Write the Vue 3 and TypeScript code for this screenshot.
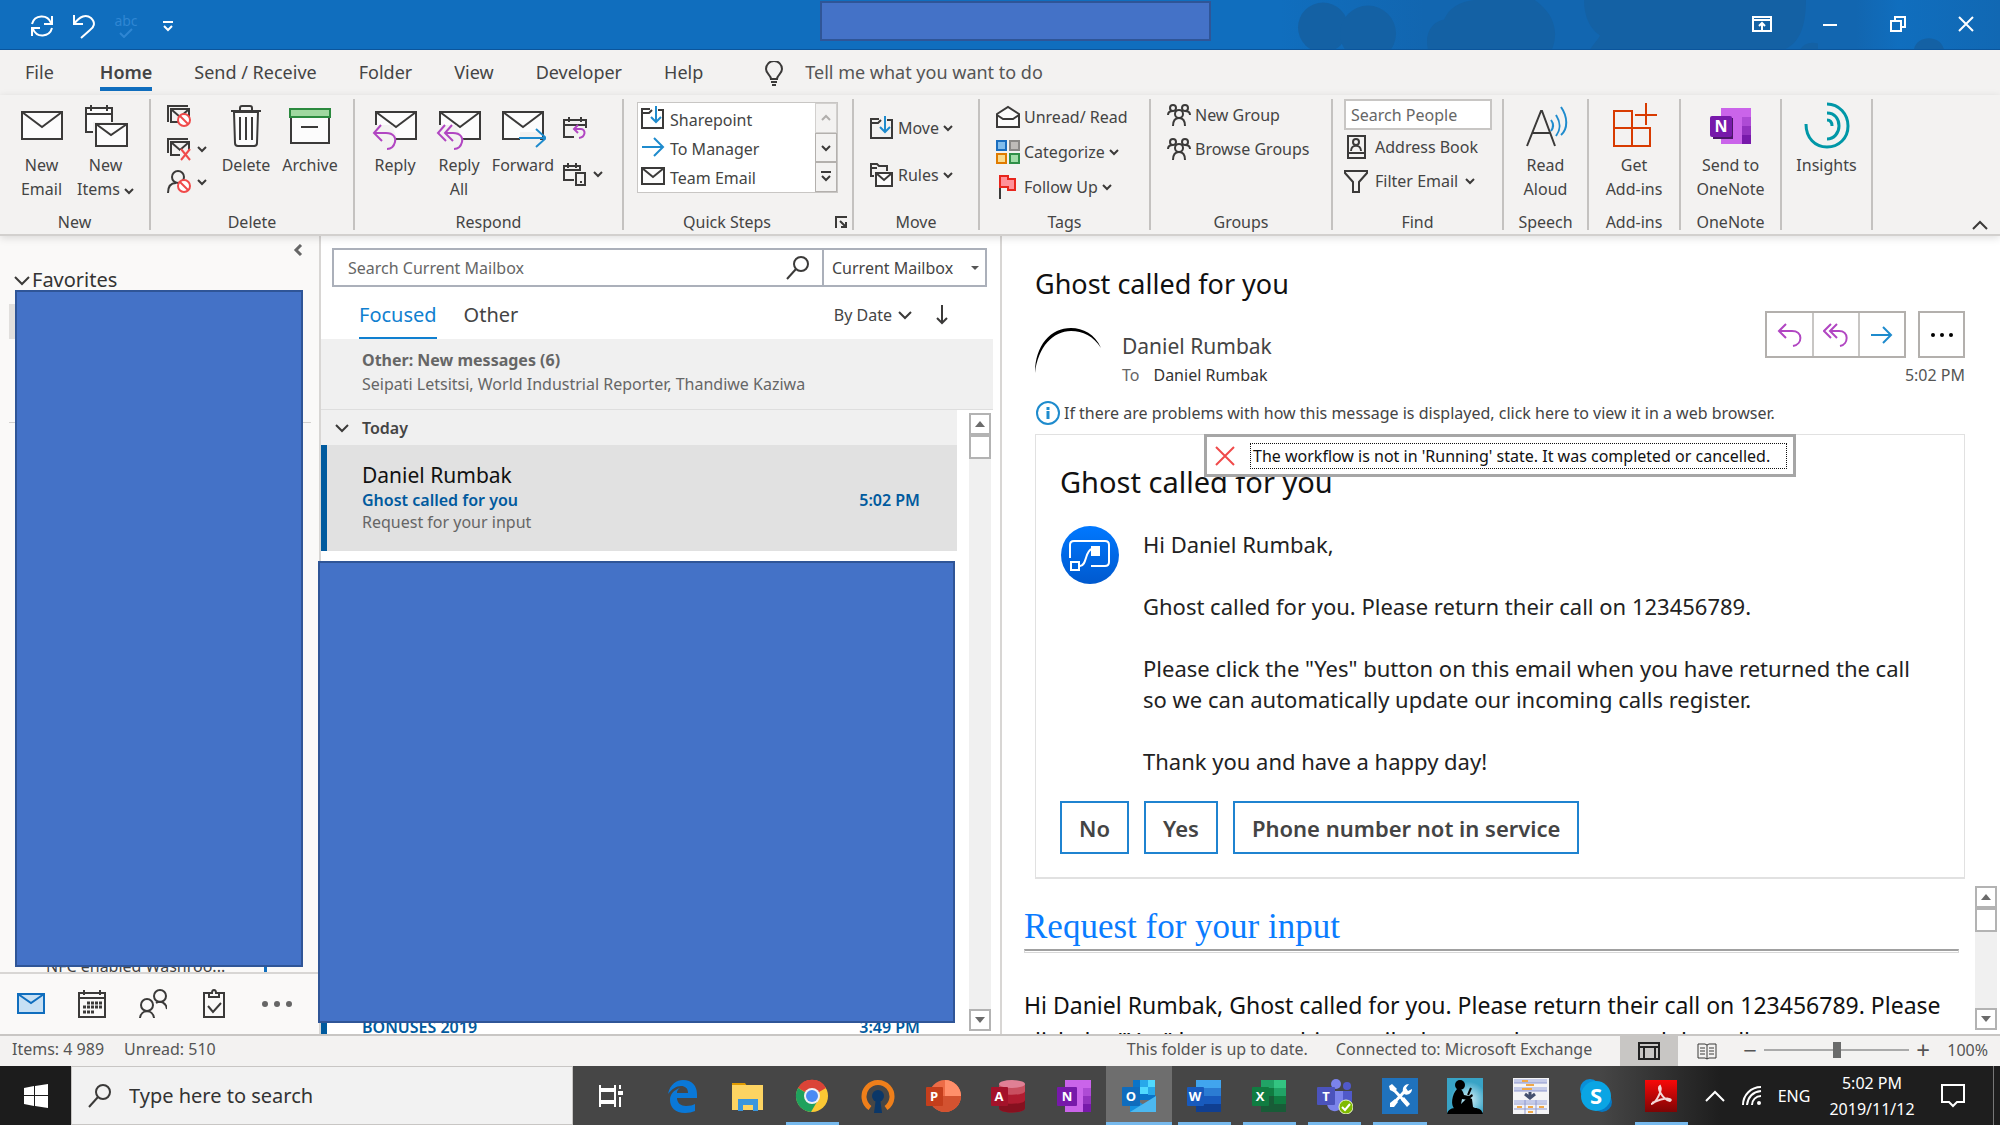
<script setup lang="ts">
import { h, ref } from 'vue'

interface IconShape { w: number; h: number; body: string }

const ink = 'fill="none" stroke="#3b3a39" stroke-width="2"'
const paper = 'fill="#fcfcfc" stroke="#3b3a39" stroke-width="2"'
const purple = 'fill="none" stroke="#b146c2" stroke-width="2"'
const blue = 'fill="none" stroke="#1e8bcd" stroke-width="2"'
const white = 'fill="none" stroke="#fff" stroke-width="2"'
const banned = (x: number, y: number) =>
  `<circle cx="${x}" cy="${y}" r="6" fill="#fff" stroke="#f04a4a" stroke-width="2"/><path d="M${x - 4} ${y - 4}l8 8" stroke="#f04a4a" stroke-width="2"/>`
const letter = (x: number, y: number, size: number, text: string) =>
  `<text x="${x}" y="${y}" font-family="Open Sans, sans-serif" font-weight="700" font-size="${size}" fill="#fff" text-anchor="middle">${text}</text>`
const people = '<circle cx="6" cy="5" r="3"/><circle cx="18" cy="5" r="3"/><circle cx="12" cy="11" r="4"/><path d="M1 12c0-3 2-4 5-4M23 12c0-3-2-4-5-4M6 23c0-5 2-8 6-8s6 3 6 8"/>'

const shapes: Record<string, IconShape> = {
  sync: { w: 26, h: 26, body: `<g ${white}><path d="M3 11a10 10 0 0 1 19-1M23 15a10 10 0 0 1-19 1"/><path d="M23 3v8h-8M3 23v-8h8"/></g>` },
  undo: { w: 24, h: 26, body: `<g ${white}><path d="M2 2v9h9"/><path d="M2 11C8 3 14 1 19 5c5 5 3 9-1 12l-9 8"/></g>` },
  tickDim: { w: 16, h: 10, body: '<path d="M2 5l4 4 8-8" fill="none" stroke="#2f86d3" stroke-width="2"/>' },
  qatMore: { w: 12, h: 12, body: `<path d="M1 2h10M2 6l4 4 4-4" ${white}/>` },
  ribbonDisplay: { w: 20, h: 16, body: '<path d="M1 1h18v14H1zM1 4h18M10 14V7M7 10l3-3 3 3" fill="none" stroke="#fff" stroke-width="2"/>' },
  minimize: { w: 16, h: 16, body: `<path d="M1 9h14" ${white}/>` },
  restore: { w: 16, h: 16, body: `<path d="M1 5h10v10H1zM5 5V1h10v10h-4" ${white}/>` },
  close: { w: 16, h: 16, body: `<path d="M1 1l14 14M15 1L1 15" ${white}/>` },
  bulb: { w: 18, h: 26, body: `<g ${ink}><path d="M6 18c0-4-5-5-5-10a8 8 0 0 1 16 0c0 5-5 6-5 10z"/><path d="M6 21h6M7 24h4"/></g>` },
  chevron: { w: 10, h: 8, body: `<path d="M1 2l4 4 4-4" ${ink}/>` },
  chevronBig: { w: 16, h: 12, body: `<path d="M1 3l7 7 7-7" ${ink}/>` },
  chevronMid: { w: 14, h: 12, body: `<path d="M1 3l6 6 6-6" ${ink}/>` },
  chevronUp: { w: 16, h: 12, body: `<path d="M1 10l7-7 7 7" ${ink}/>` },
  chevronDim: { w: 10, h: 8, body: '<path d="M1 6l4-4 4 4" fill="none" stroke="#b0aeac" stroke-width="2"/>' },
  moreSteps: { w: 10, h: 12, body: `<path d="M0 1h10M1 5l4 4 4-4" ${ink}/>` },
  fold: { w: 10, h: 12, body: '<path d="M8 1L3 6l5 5" fill="none" stroke="#666" stroke-width="3"/>' },
  mail: { w: 46, h: 48, body: `<path d="M3 10h40v27H3z" ${paper}/><path d="M3 10l20 15 20-15" ${ink}/>` },
  newItems: { w: 46, h: 48, body: `<path d="M3 6h26v24H3z" ${paper}/><path d="M3 12h26M8 3v6M24 3v6" ${ink}/><path d="M10 20h36v28H10z" fill="#f3f2f1"/><path d="M13 22h31v22H13z" ${paper}/><path d="M13 22l15 11 16-11" ${ink}/>` },
  trash: { w: 46, h: 48, body: `<path d="M11 10h24l-1 31q0 3-3 3H15q-3 0-3-3z" ${paper}/><path d="M8 9h30M17 9V6q0-2 2-2h8q2 0 2 2v3M17 15v23M23 15v23M29 15v23" ${ink}/>` },
  archive: { w: 46, h: 48, body: `<path d="M4 14h38v27H4z" ${paper}/><path d="M3 7h40v8H3z" fill="#9fd89f" stroke="#2b8a3e" stroke-width="2"/><path d="M14 25h17" ${ink}/>` },
  reply: { w: 46, h: 48, body: `<path d="M4 10h40v27H4z" ${paper}/><path d="M4 10l20 15 20-15" ${ink}/><path d="M0 23h20l6 16H0z" fill="#f3f2f1"/><path d="M4 10v12M44 37H24" ${ink}/><path d="M9 23L2 31l8 8M2 31h12c8 0 10 5 9 9s-4 7-8 7" ${purple}/>` },
  replyAll: { w: 46, h: 48, body: `<path d="M4 10h40v27H4z" ${paper}/><path d="M4 10l20 15 20-15" ${ink}/><path d="M0 23h20l8 16H0z" fill="#f3f2f1"/><path d="M4 10v12M44 37H28" ${ink}/><path d="M9 23L2 31l8 8M16 23l-7 8 8 8M9 31h8c8 0 10 5 9 9s-4 7-8 7" ${purple}/>` },
  forward: { w: 46, h: 48, body: `<path d="M3 10h40v27H3z" ${paper}/><path d="M3 10l20 15 20-15" ${ink}/><path d="M20 30h20v10H20z" fill="#f3f2f1"/><path d="M43 10v14" ${ink}/><path d="M19 36h26M36 27l10 9-10 9" ${blue}/>` },
  ignore: { w: 24, h: 24, body: `<path d="M1 18V2h20M4 18V5h18v13z" ${ink}/><path d="M5 6l8 7 8-7" ${ink}/>${banned(17, 16)}` },
  junk: { w: 24, h: 24, body: `<path d="M1 16V2h20M4 18V5h18v13z" ${ink}/><path d="M5 6l8 7 8-7" ${ink}/><path d="M13 13h11v11H13z" fill="#f3f2f1"/><path d="M14 12l9 11M23 12l-9 11" stroke="#f04a4a" stroke-width="2"/>` },
  blockUser: { w: 24, h: 24, body: `<circle cx="11" cy="7" r="6" ${ink}/><path d="M1 23c0-7 3-10 8-10" ${ink}/>${banned(17, 16)}` },
  meeting: { w: 24, h: 24, body: `<path d="M11 21H1V4h22v8M1 9h22M6 1v5M18 1v5" ${ink}/><path d="M15 9l-4 4 4 4M11 13h7c5 0 5 8-2 9" ${purple}/>` },
  device: { w: 24, h: 24, body: `<path d="M11 18H1V4h16v5M1 8h16M5 1v5M13 1v5M13 11h9v12h-9zM17 20h2" ${ink}/>` },
  folderMove: { w: 24, h: 24, body: `<path d="M9 3H1v19h21V4h-5M1 7h7l3-3" ${ink}/><path d="M15 0v16M10 11l5 5 5-5" ${blue}/>` },
  arrowRight: { w: 24, h: 24, body: `<path d="M1 12h20M13 3l9 9-9 9" ${blue}/>` },
  mailSmall: { w: 24, h: 24, body: `<path d="M1 4h22v16H1z" ${paper}/><path d="M1 4l11 9 11-9" ${ink}/>` },
  rules: { w: 24, h: 24, body: `<path d="M4 13H1V1h6l2 2h8v5M1 5h6" ${ink}/><path d="M6 10h16v13H6z" ${paper}/><path d="M6 10l8 7 8-7" ${ink}/>` },
  unread: { w: 24, h: 24, body: `<path d="M1 9L12 2l11 7v13H1z" ${paper}/><path d="M1 10l6 4h10l6-4" ${ink}/>` },
  categories: { w: 24, h: 24, body: '<g stroke-width="2"><path d="M1 1h9v9H1z" fill="#83beec" stroke="#1b6ebf"/><path d="M14 1h9v9h-9z" fill="#bebbb8" stroke="#8a8886"/><path d="M1 14h9v9H1z" fill="#f8db8f" stroke="#e07b00"/><path d="M14 14h9v9h-9z" fill="#a1dda8" stroke="#309048"/></g>' },
  flag: { w: 24, h: 24, body: '<path d="M4 2v22" stroke="#3b3a39" stroke-width="2"/><path d="M4 1h8v3h7v11h-7v-3H4z" fill="#ff9199" stroke="#e8261d" stroke-width="2"/>' },
  group: { w: 24, h: 24, body: `<g ${ink}>${people}</g>` },
  book: { w: 24, h: 24, body: `<path d="M4 1h17v22H4zM4 18h17" ${ink}/><circle cx="12" cy="7" r="3" ${ink}/><path d="M7 16c0-7 10-7 10 0" ${ink}/>` },
  filter: { w: 24, h: 24, body: `<path d="M1 2h22v2l-8 9v10H9V13L1 4z" ${ink}/>` },
  readAloud: { w: 46, h: 48, body: `<path d="M4 44L18 9h1l13 35M9 31h18" ${ink}/><path d="M28 18c3 4 3 7 0 11M33 13c5 8 5 14 0 21M38 5c7 10 7 22 0 28" ${blue}/>` },
  addins: { w: 46, h: 48, body: '<path d="M3 44V9h18v35zM3 26h36v18H3M35 1v22M24 13h22" fill="none" stroke="#d83b01" stroke-width="2"/>' },
  onenoteBig: { w: 46, h: 48, body: `<path d="M13 6h24v36H13z" fill="#ca64ea"/><path d="M34 6h9v9h-9z" fill="#ca64ea"/><path d="M34 15h9v9h-9z" fill="#ae4bd5"/><path d="M34 24h9v9h-9z" fill="#9332bf"/><path d="M34 33h9v9h-9z" fill="#7719aa"/><path d="M5 16h20v21H5z" fill="#4b1768"/><rect x="2" y="14" width="22" height="21" rx="2" fill="#7719aa"/>${letter(13, 30, 16, 'N')}` },
  insights: { w: 46, h: 48, body: '<path d="M23 2c12 0 21 10 21 22S35 45 23 45 2 36 2 22M23 11c8 0 12 6 12 13s-5 13-12 13M23 18c4 0 5 3 5 6" fill="none" stroke="#0097a7" stroke-width="3"/>' },
  launcher: { w: 12, h: 12, body: '<path d="M1 12V1h11M5 5l6 6M11 6v5H6" fill="none" stroke="#3b3a39" stroke-width="2"/>' },
  search: { w: 24, h: 24, body: `<circle cx="15" cy="8" r="7" ${ink}/><path d="M10 13L1 23" ${ink}/>` },
  arrowDown: { w: 12, h: 20, body: `<path d="M6 0v18M1 13l5 5 5-5" ${ink}/>` },
  triUp: { w: 10, h: 6, body: '<path d="M0 6l5-6 5 6z" fill="#6b6b6b"/>' },
  triDown: { w: 10, h: 6, body: '<path d="M0 0l5 6 5-6z" fill="#6b6b6b"/>' },
  triTiny: { w: 8, h: 4, body: '<path d="M0 0l4 4 4-4z" fill="#555"/>' },
  navMail: { w: 28, h: 30, body: '<path d="M1 5h26v19H1z" fill="#c7e0f4" stroke="#106ebe" stroke-width="2"/><path d="M1 5l13 9 13-9" fill="none" stroke="#106ebe" stroke-width="2"/>' },
  navCalendar: { w: 28, h: 30, body: `<path d="M1 4h26v24H1zM1 9h26M6 1v5M22 1v5" ${ink}/><path d="M9 14h15M5 18h19M5 23h12" stroke="#3b3a39" stroke-width="3" stroke-dasharray="3 1"/>` },
  navPeople: { w: 28, h: 30, body: `<circle cx="8" cy="16" r="6" ${ink}/><circle cx="21" cy="7" r="6" ${ink}/><path d="M1 29c1-9 13-9 14 0M17 14c5-3 10 0 11 6" ${ink}/>` },
  navTasks: { w: 28, h: 30, body: `<path d="M10 4H4v24h20V4h-6" ${ink}/><path d="M9 8V4h3c0-4 4-4 4 0h3v4zM8 17l5 6 8-9" ${ink}/>` },
  navMore: { w: 32, h: 30, body: '<circle cx="4" cy="15" r="3" fill="#666"/><circle cx="16" cy="15" r="3" fill="#666"/><circle cx="28" cy="15" r="3" fill="#666"/>' },
  avatar: { w: 68, h: 50, body: '<path d="M0 46C0 18 16 1 36 1c12 0 24 6 30 20C58 9 48 4 36 4 18 4 3 20 0 46z" fill="#000"/>' },
  actReply: { w: 26, h: 26, body: `<path d="M9 2L2 9l7 7M2 9h13c11 0 11 13 1 15" ${purple}/>` },
  actReplyAll: { w: 26, h: 26, body: `<path d="M8 2L1 9l7 7M14 2L7 9l7 7M8 9h8c10 0 10 13 1 15" ${purple}/>` },
  actForward: { w: 26, h: 26, body: `<path d="M2 13h20M14 5l8 8-8 8" ${blue}/>` },
  dots: { w: 24, h: 6, body: '<circle cx="3" cy="3" r="2"/><circle cx="12" cy="3" r="2"/><circle cx="21" cy="3" r="2"/>' },
  info: { w: 24, h: 24, body: '<circle cx="12" cy="12" r="11" fill="none" stroke="#1e8bcd" stroke-width="2"/><path d="M12 6v3M12 10v8" stroke="#1e8bcd" stroke-width="3"/>' },
  cross: { w: 20, h: 20, body: '<path d="M1 1l18 18M19 1L1 19" stroke="#f04a4a" stroke-width="2"/>' },
  flow: { w: 60, h: 60, body: '<defs><linearGradient id="flowFill" x1="0" y1="0" x2="0" y2="1"><stop offset="0" stop-color="#0078ff"/><stop offset="1" stop-color="#0059ce"/></linearGradient></defs><circle cx="30" cy="30" r="29" fill="url(#flowFill)"/><path d="M10 33V20q0-4 4-4h31q4 0 4 4v17q0 4-4 4H31" fill="none" stroke="#fff" stroke-width="2"/><path d="M11 37h8v8h-8zM20 41c7 0 5-16 12-17" fill="none" stroke="#fff" stroke-width="2"/><path d="M31 21h9v10h-9z" fill="#fff"/>' },
  viewNormal: { w: 22, h: 18, body: '<path d="M1 1h20v16H1zM1 5h20M6 5v12M17 5v12" fill="none" stroke="#222" stroke-width="2"/>' },
  viewReading: { w: 20, h: 18, body: '<path d="M1 2h7l2 1 2-1h7v14h-7l-2 1-2-1H1zM10 3v14M3 6h5M3 9h5M3 12h5M12 6h5M12 9h5M12 12h5" fill="none" stroke="#3b3a39"/>' },
  start: { w: 24, h: 24, body: '<path d="M0 4l10-2v9H0zM11 2l13-2v11H11zM0 12h10v10L0 20zM11 12h13v12l-13-2z" fill="#fff"/>' },
  taskView: { w: 24, h: 22, body: `<path d="M1 0v4h15V0M1 22v-4h15v4M1 6h15v10H1zM21 0v4M21 12v10" ${white}/><path d="M19 6h5v4h-5z" fill="#fff"/>` },
  edge: { w: 34, h: 34, body: '<path d="M3 15C5 5 12 1 18 1c9 0 14 6 14 14v4H12c0 5 4 8 9 8 4 0 7-1 9-2v7c-3 1-6 2-10 2-10 0-15-6-15-13C5 15 9 11 15 9c-3 2-3 4-3 5h11c0-5-3-7-7-7-5 0-9 3-13 8z" fill="#0a78d7"/>' },
  explorer: { w: 34, h: 34, body: '<path d="M2 4h13l2 3H2z" fill="#e09a00"/><path d="M2 6h31v25H2z" fill="#fdd462"/><path d="M8 20h20v12h-5v-6H13v6H8z" fill="#3a96dd"/>' },
  chrome: { w: 34, h: 34, body: '<circle cx="17" cy="17" r="16" fill="#fbc834"/><path d="M17 17L3 9a16 16 0 0 1 28 0z" fill="#db4437"/><path d="M3 9a16 16 0 0 0 13 24l7-12z" fill="#1fa15d"/><path d="M3 9A16 16 0 0 1 31 9H17z" fill="#db4437"/><circle cx="17" cy="17" r="8" fill="#f1f1f1"/><circle cx="17" cy="17" r="6" fill="#4a8af4"/>' },
  vpn: { w: 34, h: 34, body: '<path d="M9 29a14 14 0 1 1 16 0" fill="none" stroke="#ef7f1a" stroke-width="5"/><circle cx="17" cy="17" r="6" fill="#0b3768"/><path d="M15 19h4l2 15h-8z" fill="#0b3768"/>' },
  powerpoint: { w: 36, h: 34, body: `<circle cx="20" cy="17" r="16" fill="#ed6c47"/><path d="M20 1a16 16 0 0 1 16 16H20z" fill="#ff8f6b"/><path d="M4 17h32a16 16 0 0 1-32 0z" fill="#d35230"/><rect x="1" y="8" width="17" height="19" rx="1" fill="#c43e1c"/>${letter(9, 22, 13, 'P')}` },
  access: { w: 36, h: 34, body: `<path d="M9 5v24c0 6 26 6 26 0V5z" fill="#b01c30"/><path d="M9 5v7c0 5 26 5 26 0V5z" fill="#c94f60"/><path d="M9 21v8c0 6 26 6 26 0v-8c0 5-26 5-26 0z" fill="#86101f"/><ellipse cx="22" cy="5" rx="13" ry="4" fill="#e08095"/><rect x="1" y="8" width="17" height="19" rx="1" fill="#a4122a"/>${letter(9, 22, 13, 'A')}` },
  onenote: { w: 36, h: 34, body: `<path d="M9 1h26v32H9z" fill="#ca64ea"/><path d="M27 9h8v8h-8z" fill="#ae4bd5"/><path d="M27 17h8v8h-8z" fill="#9332bf"/><path d="M27 25h8v8h-8z" fill="#7719aa"/><rect x="1" y="8" width="20" height="19" rx="1" fill="#7719aa"/>${letter(11, 22, 13, 'N')}` },
  outlook: { w: 36, h: 34, body: `<path d="M12 1h22v20H12z" fill="#0a74c9"/><path d="M19 1h8v7h-8z" fill="#28a8ea"/><path d="M27 1h7v7h-7zM19 8h8v7h-8z" fill="#50d9ff"/><path d="M27 8h7v8h-7z" fill="#28a8ea"/><path d="M9 17l14 9 12-9v16H9z" fill="#1490df"/><path d="M9 33l26-16v16z" fill="#4cb8f0"/><rect x="1" y="8" width="18" height="19" rx="1" fill="#0f6cbd"/>${letter(10, 22, 13, 'O')}` },
  word: { w: 36, h: 34, body: `<path d="M10 1h25v8H10z" fill="#41a5ee"/><path d="M10 9h25v8H10z" fill="#2b7cd3"/><path d="M10 17h25v8H10z" fill="#185abd"/><path d="M10 25h25v8H10z" fill="#103f91"/><rect x="1" y="8" width="17" height="19" rx="1" fill="#185abd"/>${letter(9, 22, 13, 'W')}` },
  excel: { w: 36, h: 34, body: `<path d="M10 1h13v8H10z" fill="#21a366"/><path d="M23 1h12v8H23z" fill="#33c481"/><path d="M10 9h13v8H10z" fill="#107c41"/><path d="M23 9h12v8H23z" fill="#21a366"/><path d="M10 17h13v16H10z" fill="#185c37"/><path d="M23 17h12v8H23z" fill="#107c41"/><path d="M23 25h12v8H23z" fill="#185c37"/><rect x="1" y="8" width="17" height="19" rx="1" fill="#107c41"/>${letter(9, 22, 13, 'X')}` },
  teams: { w: 36, h: 36, body: `<circle cx="19" cy="6" r="5" fill="#7b83eb"/><circle cx="30" cy="8" r="4" fill="#5059c9"/><path d="M24 13h11v9c0 6-5 8-9 7z" fill="#5059c9"/><path d="M10 13h16v11c0 12-16 12-16 1z" fill="#7b83eb"/><rect x="0" y="9" width="18" height="18" rx="1" fill="#4b53bc"/>${letter(9, 23, 13, 'T')}<circle cx="29" cy="29" r="7" fill="#7fba00" stroke="#e8f5c8"/><path d="M25 29l3 3 5-6" ${white}/>` },
  tools: { w: 36, h: 36, body: '<path d="M0 0h36v36H0z" fill="#1f72bd"/><path d="M12 12l14 15M22 14L10 27" stroke="#fff" stroke-width="3"/><path d="M22 19l6 7-3 3-6-7z" fill="#fff"/><path d="M7 8l3-2 5 5-3 3-4-2z" fill="#fff"/><path d="M21 14c-1-5 2-8 6-8l-3 4 2 3 4-2c0 4-4 7-8 5z" fill="#fff"/><path d="M8 25l5-4 3 3-4 5H8z" fill="#fff"/>' },
  kindle: { w: 36, h: 36, body: '<defs><radialGradient id="dusk" cx="0.6" cy="0.6"><stop offset="0" stop-color="#d9f3fa"/><stop offset="1" stop-color="#38a3c6"/></radialGradient></defs><path d="M0 0h36v36H0z" fill="url(#dusk)"/><circle cx="13" cy="7" r="5"/><path d="M10 11c4-1 6 2 7 6l5 1 3-2 1 2-5 4-6-1-1 5 7-7 4 2 1 8 4 2H8c-5-3-3-15 2-20z"/><path d="M21 17l3-7" stroke="#000" stroke-width="2"/><path d="M0 36c1-5 5-6 9-6h19c4 0 7 2 8 6z"/>' },
  sheet: { w: 36, h: 36, body: '<path d="M0 0h36v36H0z" fill="#f4f4f6"/><g fill="#c5cbe9"><path d="M1 1h33v4H1zM1 9h33v4H1zM1 22h33v3H1z"/></g><path d="M9 3h6M13 7h8M9 11h10M4 29h5M15 29h5M26 29h5M15 34h5" stroke="#f0a848" stroke-width="2"/><path d="M1 5h33M1 13h33M1 26h33M1 31h33M12 22v14M23 22v14" stroke="#8e98cf"/><path d="M17 14v5M12 16l5 4 5-4" stroke="#44506e" stroke-width="3" fill="none"/>' },
  skype: { w: 36, h: 36, body: `<circle cx="12" cy="11" r="10" fill="#0a8fd8"/><circle cx="24" cy="24" r="10" fill="#0578c4"/><circle cx="18" cy="18" r="15" fill="#0aa5e4"/>${letter(18, 26, 22, 'S')}` },
  pdf: { w: 32, h: 32, body: '<defs><linearGradient id="redFill" x1="0" y1="0" x2="0" y2="1"><stop offset="0" stop-color="#f90808"/><stop offset="1" stop-color="#7d0505"/></linearGradient></defs><path d="M0 0h32v32H0z" fill="url(#redFill)"/><path d="M6 24c4 0 12-13 9-18-3 2 2 13 10 15 3-2-2-5-18 2" fill="none" stroke="#f3d9d9" stroke-width="2"/>' },
  trayUp: { w: 20, h: 12, body: `<path d="M1 11l9-9 9 9" ${white}/>` },
  wifi: { w: 20, h: 20, body: '<path d="M1 19C1 9 9 1 19 1M5 19C6 11 11 6 19 5M10 19c0-5 4-9 9-9" fill="none" stroke="#fff" stroke-width="2"/><circle cx="17" cy="17" r="2" fill="#fff"/>' },
  notify: { w: 24, h: 24, body: `<path d="M1 1h22v17h-7l-4 4-4-4H1z" ${white}/>` },
}

const Icon = (props: { name: string }) => {
  const s = shapes[props.name]
  return h('svg', { width: s.w, height: s.h, viewBox: `0 0 ${s.w} ${s.h}`, 'aria-hidden': 'true', innerHTML: s.body })
}
Icon.props = ['name']

const tabs = ['File', 'Home', 'Send / Receive', 'Folder', 'View', 'Developer', 'Help']
const steps = [
  { icon: 'folderMove', label: 'Sharepoint' },
  { icon: 'arrowRight', label: 'To Manager' },
  { icon: 'mailSmall', label: 'Team Email' },
]
const apps = [
  { icon: 'edge', name: 'Edge', open: false },
  { icon: 'explorer', name: 'File Explorer', open: false },
  { icon: 'chrome', name: 'Chrome', open: true },
  { icon: 'vpn', name: 'OpenVPN', open: false },
  { icon: 'powerpoint', name: 'PowerPoint', open: false },
  { icon: 'access', name: 'Access', open: false },
  { icon: 'onenote', name: 'OneNote', open: false },
  { icon: 'outlook', name: 'Outlook', open: true, active: true },
  { icon: 'word', name: 'Word', open: true },
  { icon: 'excel', name: 'Excel', open: true },
  { icon: 'teams', name: 'Teams', open: true },
  { icon: 'tools', name: 'Tools', open: true },
  { icon: 'kindle', name: 'Kindle', open: false },
  { icon: 'sheet', name: 'Mapper', open: false },
  { icon: 'skype', name: 'Skype', open: false },
  { icon: 'pdf', name: 'Acrobat', open: true },
]
const nav = ['navMail', 'navCalendar', 'navPeople', 'navTasks', 'navMore']
const zoom = ref(50)
</script>

<template>
  <div class="screen">
    <header class="titlebar">
      <svg class="clouds" viewBox="0 0 720 50" preserveAspectRatio="xMaxYMid slice" aria-hidden="true">
        <defs>
          <linearGradient id="haze" x1="0" x2="1">
            <stop offset="0" stop-color="#106ebe" />
            <stop offset="0.2" stop-color="#1266b0" />
            <stop offset="0.8" stop-color="#1266b0" />
            <stop offset="0.86" stop-color="#106ebe" />
            <stop offset="1" stop-color="#1168b3" />
          </linearGradient>
        </defs>
        <rect width="720" height="50" fill="url(#haze)" />
        <g fill="#1461a4">
          <circle cx="43" cy="28" r="25" />
          <circle cx="88" cy="34" r="28" />
          <path d="M148 50c-4-16 4-28 16-30 6-14 20-20 40-20h50c18 12 26 30 18 50z" />
          <path d="M304 0h222c0 26-6 44-22 50H310c4-6 8-10 10-14-12-8-16-22-16-36z" />
          <path d="M520 50c4-6 10-8 18-6v6zM634 50c2-14 26-16 30 0z" />
        </g>
      </svg>
      <div class="quick-access">
        <button aria-label="Send/Receive All Folders"><Icon name="sync" /></button>
        <button aria-label="Undo"><Icon name="undo" /></button>
        <button class="spell" aria-label="Spelling"><span>abc</span><Icon name="tickDim" /></button>
        <button aria-label="Customize"><Icon name="qatMore" /></button>
      </div>
      <div class="title-cover cover"></div>
      <div class="window-controls">
        <button aria-label="Ribbon display options"><Icon name="ribbonDisplay" /></button>
        <button aria-label="Minimize"><Icon name="minimize" /></button>
        <button aria-label="Restore"><Icon name="restore" /></button>
        <button aria-label="Close"><Icon name="close" /></button>
      </div>
    </header>

    <nav class="tabs">
      <button v-for="t in tabs" :key="t" :class="{ current: t === 'Home' }">{{ t }}</button>
      <button class="tell"><Icon name="bulb" />Tell me what you want to do</button>
    </nav>

    <section class="ribbon">
      <div class="group g-new">
        <div class="tools">
          <button class="big"><Icon name="mail" /><span>New</span><span>Email</span></button>
          <button class="big"><Icon name="newItems" /><span>New</span><span>Items <Icon name="chevron" /></span></button>
        </div>
        <h2>New</h2>
      </div>
      <div class="group g-delete">
        <div class="tools">
          <div class="stack smalls">
            <button aria-label="Ignore"><Icon name="ignore" /></button>
            <button aria-label="Clean up"><Icon name="junk" /><Icon name="chevron" /></button>
            <button aria-label="Junk"><Icon name="blockUser" /><Icon name="chevron" /></button>
          </div>
          <button class="big"><Icon name="trash" /><span>Delete</span></button>
          <button class="big"><Icon name="archive" /><span>Archive</span></button>
        </div>
        <h2>Delete</h2>
      </div>
      <div class="group g-respond">
        <div class="tools">
          <button class="big"><Icon name="reply" /><span>Reply</span></button>
          <button class="big"><Icon name="replyAll" /><span>Reply</span><span>All</span></button>
          <button class="big"><Icon name="forward" /><span>Forward</span></button>
          <div class="stack smalls loose">
            <button aria-label="Meeting"><Icon name="meeting" /></button>
            <button aria-label="More respond actions"><Icon name="device" /><Icon name="chevron" /></button>
          </div>
        </div>
        <h2>Respond</h2>
      </div>
      <div class="group g-quick">
        <div class="gallery">
          <div class="steps">
            <button v-for="s in steps" :key="s.label"><Icon :name="s.icon" /><span>{{ s.label }}</span></button>
          </div>
          <div class="spinner">
            <button aria-label="Previous"><Icon name="chevronDim" /></button>
            <button aria-label="Next"><Icon name="chevron" /></button>
            <button aria-label="More"><Icon name="moreSteps" /></button>
          </div>
        </div>
        <div class="label-row">
          <h2>Quick Steps</h2>
          <button aria-label="Manage quick steps"><Icon name="launcher" /></button>
        </div>
      </div>
      <div class="group g-move">
        <div class="stack rows wide">
          <button><Icon name="folderMove" />Move <Icon name="chevron" /></button>
          <button><Icon name="rules" />Rules <Icon name="chevron" /></button>
        </div>
        <h2>Move</h2>
      </div>
      <div class="group g-tags">
        <div class="stack rows">
          <button><Icon name="unread" />Unread/ Read</button>
          <button><Icon name="categories" />Categorize <Icon name="chevron" /></button>
          <button><Icon name="flag" />Follow Up <Icon name="chevron" /></button>
        </div>
        <h2>Tags</h2>
      </div>
      <div class="group g-groups">
        <div class="stack rows">
          <button><Icon name="group" />New Group</button>
          <button><Icon name="group" />Browse Groups</button>
        </div>
        <h2>Groups</h2>
      </div>
      <div class="group g-find">
        <div class="stack rows">
          <input type="text" placeholder="Search People" aria-label="Search People" />
          <button><Icon name="book" />Address Book</button>
          <button><Icon name="filter" />Filter Email <Icon name="chevron" /></button>
        </div>
        <h2>Find</h2>
      </div>
      <div class="group g-speech">
        <div class="tools"><button class="big"><Icon name="readAloud" /><span>Read</span><span>Aloud</span></button></div>
        <h2>Speech</h2>
      </div>
      <div class="group g-addins">
        <div class="tools"><button class="big"><Icon name="addins" /><span>Get</span><span>Add-ins</span></button></div>
        <h2>Add-ins</h2>
      </div>
      <div class="group g-onenote">
        <div class="tools"><button class="big"><Icon name="onenoteBig" /><span>Send to</span><span>OneNote</span></button></div>
        <h2>OneNote</h2>
      </div>
      <div class="group g-insights">
        <div class="tools"><button class="big"><Icon name="insights" /><span>Insights</span></button></div>
      </div>
      <button class="collapse" aria-label="Collapse the ribbon"><Icon name="chevronUp" /></button>
    </section>

    <main class="workspace">
      <aside class="folders">
        <div class="folder-area">
          <button class="fold" aria-label="Minimize the folder pane"><Icon name="fold" /></button>
          <button class="favorites"><Icon name="chevronBig" />Favorites</button>
          <div class="folder-selected"></div>
          <div class="folder-rule"></div>
          <div class="folder-last"><span>NFC enabled Washroo...</span><i></i></div>
          <div class="cover folder-cover"></div>
        </div>
        <div class="modules">
          <button v-for="n in nav" :key="n" :aria-label="n"><Icon :name="n" /></button>
        </div>
      </aside>

      <section class="messages">
        <div class="search">
          <input type="text" placeholder="Search Current Mailbox" aria-label="Search Current Mailbox" />
          <button aria-label="Search"><Icon name="search" /></button>
          <div class="scope">
            <select aria-label="Search scope"><option>Current Mailbox</option></select>
            <Icon name="triTiny" />
          </div>
        </div>
        <div class="pivots">
          <button class="current">Focused</button>
          <button>Other</button>
          <button class="sort">By Date <Icon name="chevronMid" /></button>
          <button class="order" aria-label="Newest first"><Icon name="arrowDown" /></button>
        </div>
        <div class="other-banner">
          <strong>Other: New messages (6)</strong>
          <span>Seipati Letsitsi, World Industrial Reporter, Thandiwe Kaziwa</span>
        </div>
        <div class="list-area">
          <div class="list">
            <div class="day"><Icon name="chevronMid" /><strong>Today</strong></div>
            <article class="message selected">
              <p class="from">Daniel Rumbak</p>
              <p class="subject"><span>Ghost called for you</span><time>5:02 PM</time></p>
              <p class="preview">Request for your input</p>
            </article>
            <article class="message last">
              <p class="subject"><span>BONUSES 2019</span><time>3:49 PM</time></p>
            </article>
            <div class="cover list-cover"></div>
          </div>
          <div class="scrollbar">
            <button aria-label="Scroll up"><Icon name="triUp" /></button>
            <div class="thumb"></div>
            <button class="down" aria-label="Scroll down"><Icon name="triDown" /></button>
          </div>
        </div>
      </section>

      <section class="reading">
        <h1>Ghost called for you</h1>
        <div class="sender">
          <Icon name="avatar" />
          <div class="who">
            <p class="name">Daniel Rumbak</p>
            <p class="to"><span>To</span>Daniel Rumbak</p>
          </div>
          <div class="actions">
            <div class="action-row">
              <div class="trio">
                <button aria-label="Reply"><Icon name="actReply" /></button>
                <button aria-label="Reply all"><Icon name="actReplyAll" /></button>
                <button aria-label="Forward"><Icon name="actForward" /></button>
              </div>
              <button class="more" aria-label="More actions"><Icon name="dots" /></button>
            </div>
            <time>5:02 PM</time>
          </div>
        </div>
        <a class="notice" href="#"><Icon name="info" />If there are problems with how this message is displayed, click here to view it in a web browser.</a>
        <div class="card">
          <div class="toast" role="alert">
            <Icon name="cross" />
            <span>The workflow is not in 'Running' state. It was completed or cancelled.</span>
          </div>
          <h2>Ghost called for you</h2>
          <div class="card-body">
            <Icon name="flow" />
            <div class="copy">
              <p>Hi Daniel Rumbak,</p>
              <p>Ghost called for you. Please return their call on 123456789.</p>
              <p>Please click the "Yes" button on this email when you have returned the call so we can automatically update our incoming calls register.</p>
              <p>Thank you and have a happy day!</p>
            </div>
          </div>
          <div class="choices">
            <button>No</button>
            <button>Yes</button>
            <button>Phone number not in service</button>
          </div>
        </div>
        <div class="mail">
          <div class="mail-text">
            <h2>Request for your input</h2>
            <hr />
            <p>Hi Daniel Rumbak, Ghost called for you. Please return their call on 123456789. Please click the "Yes" button on this email when you have returned the call so</p>
          </div>
          <div class="scrollbar">
            <button aria-label="Scroll up"><Icon name="triUp" /></button>
            <div class="thumb"></div>
            <button class="down" aria-label="Scroll down"><Icon name="triDown" /></button>
          </div>
        </div>
      </section>
    </main>

    <footer class="status">
      <span class="items">Items: 4 989</span>
      <span>Unread: 510</span>
      <span class="sync-state">This folder is up to date.</span>
      <span>Connected to: Microsoft Exchange</span>
      <button class="view on" aria-label="Normal view"><Icon name="viewNormal" /></button>
      <button class="view" aria-label="Reading view"><Icon name="viewReading" /></button>
      <div class="zoom">
        <button aria-label="Zoom out">−</button>
        <input v-model="zoom" type="range" min="0" max="100" aria-label="Zoom" />
        <button aria-label="Zoom in">+</button>
        <span>100%</span>
      </div>
    </footer>

    <div class="taskbar">
      <button class="start" aria-label="Start"><Icon name="start" /></button>
      <label class="find-box"><Icon name="search" /><input type="text" placeholder="Type here to search" aria-label="Type here to search" /></label>
      <button class="task-view" aria-label="Task View"><Icon name="taskView" /></button>
      <div class="apps">
        <button v-for="a in apps" :key="a.name" :class="{ open: a.open, active: a.active }" :aria-label="a.name"><Icon :name="a.icon" /></button>
      </div>
      <div class="tray">
        <button aria-label="Show hidden icons"><Icon name="trayUp" /></button>
        <button aria-label="Network"><Icon name="wifi" /></button>
        <span class="lang">ENG</span>
        <div class="clock"><span>5:02 PM</span><span>2019/11/12</span></div>
        <button class="notify" aria-label="Notifications"><Icon name="notify" /></button>
      </div>
    </div>
  </div>
</template>

<style>
body { margin: 0; overflow: hidden; }
</style>

<style scoped>
.screen {
  display: flex;
  flex-direction: column;
  height: 100vh;
  overflow: hidden;
  background: #fff;
  color: #444;
  font: 16px/20px "Noto Sans", "Open Sans", sans-serif;
}
.screen * { box-sizing: border-box; }
button, input, select { font: inherit; color: inherit; border: 0; padding: 0; margin: 0; background: none; border-radius: 0; outline: 0; }
button { display: flex; align-items: center; justify-content: center; white-space: nowrap; flex: none; }
h1, h2, p { margin: 0; font-weight: 400; }
svg { flex: none; }
input::placeholder { color: #666; opacity: 1; }
.cover { background: #4472c7; border: 2px solid #2f5597; }

.titlebar { position: relative; display: grid; grid-template-columns: 41% 391px 1fr; height: 50px; flex: none; background: #106ebe; border-bottom: 1px solid #0b559c; }
.clouds { position: absolute; right: 0; top: 0; width: 36%; height: 49px; }
.quick-access { display: flex; align-items: center; padding: 2px 0 0 21px; }
.quick-access button { width: 42px; height: 46px; }
.quick-access .spell { flex-direction: column; color: #2f86d3; font-size: 14px; line-height: 14px; }
.title-cover { height: 40px; margin-top: 1px; }
.window-controls { position: relative; display: flex; justify-content: flex-end; }
.window-controls button { width: 68px; height: 47px; }

.tabs { display: flex; flex: none; gap: 42px; height: 45px; padding-left: 25px; background: #f3f2f1; font-size: 18px; }
.tabs button { align-items: flex-start; height: 41px; padding-top: 11px; line-height: 22px; }
.tabs button:first-child { margin-right: 4px; }
.tabs .current { font-weight: 600; border-bottom: 4px solid #106ebe; }
.tabs .tell { margin-left: 20px; gap: 22px; color: #555; }

.ribbon { display: flex; flex: none; height: 141px; padding-top: 4px; background: #f3f2f1; border-bottom: 2px solid #d2d0ce; box-shadow: 0 2px 8px #0002; z-index: 1; position: relative; }
.group { display: flex; flex-direction: column; height: 131px; flex: none; border-right: 2px solid #c4c2c0; }
.group h2 { font-size: 16px; line-height: 16px; text-align: center; margin-top: auto; }
.g-new { width: 151px; }
.g-delete { width: 204px; }
.g-respond { width: 269px; }
.g-quick { width: 230px; }
.g-move { width: 126px; }
.g-tags { width: 171px; }
.g-groups { width: 182px; }
.g-find { width: 171px; }
.g-speech { width: 85px; }
.g-addins { width: 92px; }
.g-onenote { width: 101px; }
.g-insights { width: 91px; }
.tools { display: flex; justify-content: center; padding-top: 3px; }
.g-new .tools { padding-right: 2px; }
.g-delete .tools { justify-content: flex-start; padding-left: 8px; }
.g-respond .tools { padding-left: 3px; }
.big { flex-direction: column; justify-content: flex-start; width: 64px; line-height: 24px; }
.big > svg { margin-bottom: 3px; }
.stack { display: flex; flex-direction: column; align-items: flex-start; }
.smalls { width: 55px; gap: 9px; padding: 2px 0 0 8px; }
.smalls button { gap: 6px; height: 24px; }
.smalls.loose { width: 62px; gap: 22px; padding: 14px 0 0 8px; }
.rows { padding: 6px 0 0 16px; gap: 11px; }
.rows button { gap: 4px; height: 24px; }
.rows.wide { padding-top: 17px; gap: 23px; }
.g-groups .rows { padding-top: 4px; gap: 10px; }
.g-find .rows { padding: 0 0 0 11px; gap: 10px; }
.g-find .rows button { gap: 7px; }
.g-find input { width: 148px; height: 31px; margin-bottom: -5px; padding: 0 5px; background: #fff; border: 2px solid #c8c6c4; }
.gallery { display: flex; width: 201px; height: 91px; margin: 3px 0 0 13px; background: #fff; border: 1px solid #c8c6c4; }
.steps { flex: 1; }
.steps button { width: 100%; height: 29px; justify-content: flex-start; gap: 5px; padding-left: 3px; }
.steps span { padding-top: 5px; }
.spinner { width: 22px; display: flex; flex-direction: column; background: #f3f2f1; }
.spinner button { flex: 1; border: 1px solid #b3b0ad; }
.spinner button:first-child { border-color: #d2d0ce; }
.label-row { display: flex; margin-top: auto; }
.label-row h2 { flex: 1; }
.label-row button { width: 22px; }
.collapse { margin: auto 12px 3px auto; }

.workspace { display: flex; flex: 1; min-height: 0; }
.folders { display: flex; flex-direction: column; flex: none; width: 321px; background: #faf9f8; border-right: 2px solid #d8d6d4; }
.folder-area { position: relative; flex: 1; min-height: 0; overflow: hidden; display: flex; flex-direction: column; }
.fold { align-self: flex-end; height: 14px; margin: 7px 16px 0 0; }
.favorites { align-self: flex-start; gap: 2px; height: 26px; margin: 10px 0 0 14px; font-size: 20px; color: #333; }
.folder-selected { height: 35px; margin: 11px 16px 0 9px; background: #e1dfdd; }
.folder-rule { height: 1px; margin: 83px 8px 0 9px; background: #d2d0ce; }
.folder-last { display: flex; align-items: center; height: 24px; margin: auto 0 -6px 46px; color: #444; }
.folder-last span { width: 218px; }
.folder-last i { width: 3px; height: 22px; background: #106ebe; }
.folder-cover { position: absolute; top: 54px; bottom: 5px; left: 15px; width: 288px; }
.modules { display: flex; flex: none; justify-content: space-between; height: 62px; padding: 0 26px 0 17px; border-top: 2px solid #d8d6d4; }

.messages { display: flex; flex-direction: column; flex: none; width: 681px; border-right: 2px solid #d8d6d4; }
.search { display: flex; flex: none; height: 39px; margin: 12px 13px 0 11px; border: 2px solid #abb0ba; }
.search > input { flex: 1; padding-left: 14px; }
.search > button { width: 48px; }
.scope { display: flex; align-items: center; width: 163px; padding-left: 8px; border-left: 2px solid #abb0ba; }
.scope select { flex: 1; appearance: none; }
.scope svg { margin-right: 6px; }
.pivots { display: flex; flex: none; height: 52px; padding: 0 52px 0 38px; }
.pivots button { margin-right: 27px; font-size: 20px; padding-top: 5px; border-bottom: 2px solid transparent; }
.pivots .current { color: #1080d0; border-color: #1080d0; }
.pivots .sort { margin: 0 24px 0 auto; gap: 6px; font-size: 16px; }
.pivots .order { margin: 0; }
.other-banner { flex: none; height: 71px; margin-right: 7px; padding: 9px 0 0 41px; background: #f0f0f0; color: #666; line-height: 24px; border-bottom: 1px solid #dedede; }
.other-banner strong, .other-banner span { display: block; }
strong { font-weight: 600; }
.other-banner strong { font-weight: 700; }
.list-area { display: flex; flex: 1; min-height: 0; }
.list { position: relative; display: flex; flex-direction: column; width: 636px; }
.day { display: flex; align-items: center; flex: none; height: 35px; padding-left: 14px; gap: 13px; background: #f0f0f0; color: #444; }
.message { flex: none; padding-left: 35px; border-left: 6px solid #005a9e; }
.message.selected { height: 106px; padding-top: 17px; background: #e1e1e1; }
.message.last { margin-top: auto; height: 18px; overflow: hidden; }
.from { font-size: 21px; line-height: 27px; color: #111; }
.subject { display: flex; justify-content: space-between; padding-right: 37px; line-height: 22px; font-weight: 600; color: #005a9e; }
.preview { line-height: 22px; color: #666; }
.list-cover { position: absolute; top: 151px; bottom: 11px; left: -3px; width: 637px; }
.scrollbar { display: flex; flex-direction: column; flex: none; width: 22px; background: #f0f0f0; }
.scrollbar button, .thumb { height: 22px; background: #fff; border: 2px solid #b3b3b3; flex: none; }
.thumb { height: 24px; }
.scrollbar .down { margin-top: auto; }
.list-area .scrollbar { margin: 3px 0 3px 12px; }

.reading { display: flex; flex-direction: column; flex: 1; min-width: 0; padding-left: 33px; }
.reading h1 { font-size: 27px; line-height: 36px; margin-top: 30px; color: #111; }
.sender { display: flex; height: 84px; padding-right: 35px; margin-top: 9px; }
.sender > svg { margin-top: 16px; }
.who { flex: 1; padding: 21px 0 0 19px; }
.name { font-size: 21px; line-height: 29px; }
.to { line-height: 28px; color: #333; }
.to span { margin-right: 14px; color: #666; }
.actions { display: flex; flex-direction: column; align-items: flex-end; line-height: 34px; color: #555; }
.action-row { display: flex; gap: 12px; }
.trio { display: flex; border: 2px solid #b3b0ad; }
.trio button { width: 45px; height: 43px; }
.trio button + button { border-left: 2px solid #c8c6c4; width: 46px; }
.more { width: 47px; height: 47px; border: 2px solid #b3b0ad; }
.notice { display: flex; align-items: center; align-self: flex-start; gap: 4px; height: 24px; margin: 6px 0 0 1px; color: #444; text-decoration: none; white-space: nowrap; }
.card { position: relative; flex: none; margin: 9px 35px 0 0; padding: 25px 24px 23px; border: 1px solid #e1e1e1; border-bottom-width: 2px; }
.toast { position: absolute; top: -1px; left: 168px; display: flex; align-items: center; gap: 15px; height: 43px; padding: 0 6px 0 8px; background: #fff; border: 3px solid #a6a6a6; color: #111; white-space: nowrap; }
.toast span { padding: 2px 16px 2px 2px; border: 1px dotted #111; }
.card h2 { font-size: 29px; line-height: 44px; color: #111; }
.card-body { display: flex; gap: 23px; margin-top: 21px; }
.copy { padding: 4px 20px 0 0; font-size: 22px; line-height: 31px; color: #222; }
.copy p + p { margin-top: 31px; }
.choices { display: flex; gap: 15px; margin-top: 24px; }
.choices button { height: 53px; padding: 0 17px; border: 2px solid #1f83d0; font-size: 22px; font-weight: 600; color: #444; }
.mail { display: flex; flex: 1; min-height: 0; margin: 7px 3px 4px -11px; }
.mail-text { flex: 1; height: calc(100% + 4px); overflow: hidden; }
.mail-text h2 { margin-top: 19px; font: 35px/44px "Liberation Serif", serif; color: #0a7cff; }
.mail-text hr { height: 4px; margin: 0; border: 1px solid #d8d8d8; border-top: 2px solid #a0a0a0; }
.mail-text p { margin-top: 34px; font-size: 23px; line-height: 36px; color: #111; }
.mail .scrollbar { margin-left: 16px; }

.status { display: flex; align-items: center; flex: none; height: 32px; padding: 0 12px; background: #f3f2f1; border-top: 2px solid #c8c6c4; color: #555; white-space: nowrap; }
.status > span { margin-right: 28px; padding-bottom: 4px; }
.status > .items { margin-right: 20px; }
.status > .sync-state { margin-left: auto; }
.view { width: 58px; height: 100%; }
.view.on { background: #c8c6c4; }
.zoom { display: flex; align-items: center; gap: 7px; margin-left: 7px; padding-bottom: 2px; }
.zoom button { width: 14px; font-size: 24px; line-height: 24px; }
.zoom input { width: 145px; height: 18px; appearance: none; background: linear-gradient(#aaa, #aaa) center / 100% 2px no-repeat; }
.zoom input::-webkit-slider-thumb { appearance: none; width: 8px; height: 16px; background: #6b6b6b; }
.zoom span { margin-left: 10px; }

.taskbar { display: flex; flex: none; height: 59px; background: linear-gradient(90deg, #464646 80%, #1e1e1e 86%); color: #fff; }
.start { width: 71px; background: #1c1c1c; }
.find-box { display: flex; align-items: center; gap: 17px; width: 502px; padding-left: 16px; background: #f2f2f2; border: 1px solid #c8c6c4; color: #222; font-size: 20px; }
.find-box input { flex: 1; }
.find-box input::placeholder { color: #333; }
.task-view { width: 75px; }
.apps { display: flex; flex: 1; padding-left: 1px; }
.apps button { position: relative; flex: 1; }
.apps .active { background: #6e6e6e; }
.apps .open::after { content: ""; position: absolute; left: 6px; right: 6px; bottom: 0; height: 3px; background: #76b9ed; }
.apps .active::after { left: 0; right: 0; }
.tray { display: flex; align-items: center; flex: none; width: 306px; }
.tray button { width: 42px; height: 100%; }
.tray button + button { width: 32px; }
.lang { width: 52px; text-align: center; }
.clock { width: 104px; text-align: center; line-height: 26px; }
.clock span { display: block; }
.tray .notify { width: 70px; padding-right: 12px; border-right: 1px solid #777; }
</style>
